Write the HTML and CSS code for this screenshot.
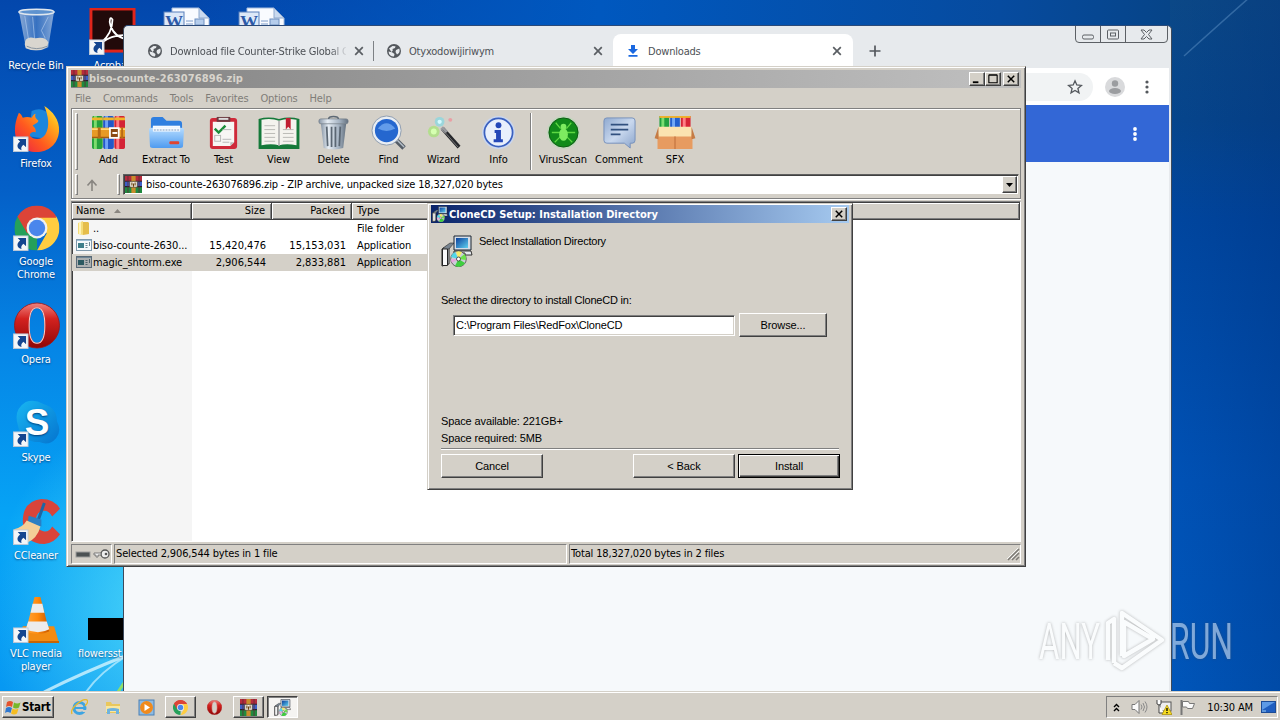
FILE: index.html
```html
<!DOCTYPE html>
<html lang="en">
<head>
    <meta charset="UTF-8">
    <meta name="viewport" content="width=device-width, initial-scale=1.0">
    <title>Desktop</title>
    <link rel="stylesheet" href="styles.css">
</head>
<body>
    <!-- shared icons -->
    <svg class="defs" width="0" height="0">
        <defs>
            <linearGradient id="gGlass" x1="0" x2="1"><stop offset="0" stop-color="#b9cbe3" stop-opacity=".75"/><stop offset=".5" stop-color="#5b8ccc" stop-opacity=".6"/><stop offset="1" stop-color="#b3c9e6" stop-opacity=".75"/></linearGradient>
            <linearGradient id="gOpera" x1="0" y1="0" x2="0" y2="1"><stop offset="0" stop-color="#f0837e"/><stop offset=".35" stop-color="#d3221f"/><stop offset="1" stop-color="#8f0606"/></linearGradient>
            <linearGradient id="gFox" x1="0" y1="1" x2="1" y2="0"><stop offset="0" stop-color="#e8174f"/><stop offset=".4" stop-color="#ff5a1f"/><stop offset=".75" stop-color="#ffb01c"/><stop offset="1" stop-color="#fff04a"/></linearGradient>
            <linearGradient id="gFolder" x1="0" y1="0" x2="0" y2="1"><stop offset="0" stop-color="#b6dcff"/><stop offset="1" stop-color="#4e9bf0"/></linearGradient>
            <linearGradient id="gMetal" x1="0" x2="1"><stop offset="0" stop-color="#8896a6"/><stop offset=".3" stop-color="#e6edf4"/><stop offset=".7" stop-color="#a5b3c2"/><stop offset="1" stop-color="#64717f"/></linearGradient>
            <linearGradient id="gBubble" x1="0" y1="0" x2="1" y2="1"><stop offset="0" stop-color="#8fa9d0"/><stop offset=".5" stop-color="#c9d8ee"/><stop offset="1" stop-color="#8aa4cb"/></linearGradient>
            <linearGradient id="gScreen" x1="0" y1="0" x2="1" y2="1"><stop offset="0" stop-color="#0b3f9c"/><stop offset="1" stop-color="#5fd0f0"/></linearGradient>
            <linearGradient id="gSkype" x1="0" y1="0" x2="1" y2="1"><stop offset="0" stop-color="#18b6f2"/><stop offset="1" stop-color="#0574cf"/></linearGradient>
            <linearGradient id="gCone" x1="0" x2="1"><stop offset="0" stop-color="#ffa53a"/><stop offset=".5" stop-color="#ff8a0d"/><stop offset="1" stop-color="#c95a00"/></linearGradient>
        </defs>

        <symbol id="shortcut" viewBox="0 0 15 15">
            <rect x=".5" y=".5" width="14" height="14" fill="#f4f6f8" stroke="#b9c6d6"/>
            <path d="M4.500 2.500h8v8L10 8C8 9.500 7.500 11 8.200 13.200 3.800 12 2.800 8 6.800 5z" fill="#14458f"/>
        </symbol>

        <symbol id="rar" viewBox="0 0 16 16">
            <rect width="16" height="5" y="0" fill="#b52b3c"/>
            <rect width="16" height="5" y="5" fill="#3d5fc4"/>
            <rect width="16" height="6" y="10" fill="#1f8a3f"/>
            <path d="M0 4.900h16M0 10h16" stroke="#241c30" stroke-width="1"/>
            <rect x="2" width="1.500" height="16" fill="#5d2a35" opacity=".5"/>
            <rect x="12.500" width="1.500" height="16" fill="#5d2a35" opacity=".5"/>
            <rect x="6" width="4" height="16" fill="#c98d2c"/>
            <rect x="4.500" y="5" width="7" height="5.500" fill="#f2efe6" stroke="#55442e" stroke-width=".7"/>
            <path d="M6.500 6v3M8 7v3M9.500 6v3" stroke="#69400f" stroke-width="1"/>
        </symbol>

        <symbol id="books" viewBox="0 0 34 34">
            <rect x="0" y="0" width="11" height="34" rx="2" fill="#24a13d"/><rect x="2" y="0" width="3" height="34" fill="#7ddc6d"/>
            <rect x="11.500" y="0" width="11" height="34" rx="2" fill="#2258c9"/><rect x="13.500" y="0" width="3" height="34" fill="#6fa2f5"/>
            <rect x="23" y="0" width="11" height="34" rx="2" fill="#d42336"/><rect x="25" y="0" width="3" height="34" fill="#ff7c83"/>
            <path d="M0 3h11M11.500 3h11M23 3h11" stroke="#f0b429" stroke-width="3"/>
            <rect x="-1" y="12" width="36" height="11" fill="#e79a25"/>
            <path d="M0 13.500h34" stroke="#ffd675" stroke-width="2"/>
            <path d="M0 22h34" stroke="#a55b10" stroke-width="1.500"/>
            <rect x="6" y="12" width="3" height="11" fill="#b96a14"/><rect x="30" y="12" width="2" height="11" fill="#b96a14"/>
            <rect x="18.500" y="12.500" width="9" height="10" fill="#8b4a14" stroke="#fff" stroke-width="1.800"/>
            <path d="M21 17.500h5" stroke="#fff" stroke-width="2"/>
        </symbol>

        <symbol id="chrome" viewBox="0 0 44 44">
            <path d="M22 22 2.900 11A22 22 0 0 1 41 11z" fill="#dc4437"/>
            <path d="M22 22V44A22 22 0 0 1 2.900 11z" fill="#25a05a"/>
            <path d="M22 0m19 11H22L31.500 27.500 22 44A22 22 0 0 0 41 11z" fill="#ffcd40"/>
            <path d="M22 12h19a22 22 0 0 0-38-1l9.500 16.500z" fill="#dc4437"/>
            <circle cx="22" cy="22" r="10.200" fill="#f1f1f1"/>
            <circle cx="22" cy="22" r="8" fill="#4a86ec"/>
        </symbol>

        <symbol id="opera" viewBox="0 0 44 44">
            <path fill-rule="evenodd" fill="url(#gOpera)" stroke="#a11414" stroke-width=".8" d="M22 .5a21.500 21.500 0 0 1 0 43 21.500 21.500 0 0 1 0-43zM22 5c-5.500 0-7.500 7.500-7.500 17s2 17 7.500 17 7.500-7.500 7.500-17S27.500 5 22 5z"/>
            <path d="M14.500 22c0-9.500 2-17 7.500-17s7.500 7.500 7.500 17-2 17-7.500 17-7.500-7.500-7.500-17z" fill="none" stroke="#f7cdca" stroke-width="1"/>
        </symbol>

        <symbol id="setup" viewBox="0 0 32 32">
            <path d="M1 14l7-4v19l-7 2z" fill="#d6dae0" stroke="#222" stroke-width="1"/>
            <path d="M1.500 14h5v16.500h-5z" fill="#fafafa" stroke="#222" stroke-width="1"/>
            <path d="M2 13l7-5h4l-5 6z" fill="#77838f" stroke="#333" stroke-width=".6"/>
            <path d="M13 1h17v14H13z" fill="#d5dde8" stroke="#1b2430" stroke-width="1"/>
            <path d="M15 3h12v10H15z" fill="url(#gScreen)"/>
            <path d="M13 16h17l1 4h-7v-2H13z" fill="#e6e9ee" stroke="#222" stroke-width=".9"/>
            <circle cx="17.500" cy="24" r="7.800" fill="#c9ced6" stroke="#3b3b3b" stroke-width=".7"/>
            <path d="M17.500 24 10 22a7.800 7.800 0 0 1 4-5z" fill="#52d6e8"/>
            <path d="M17.500 24 15 16.700a7.800 7.800 0 0 1 6 .5z" fill="#f5ec66"/>
            <path d="M17.500 24l6-5a7.800 7.800 0 0 1 1.500 6z" fill="#6de04b"/>
            <path d="M17.500 24 24 28a7.800 7.800 0 0 1-10 3z" fill="#3fcf3f"/>
            <path d="M17.500 24 11 28a7.800 7.800 0 0 1-1-4z" fill="#e7a7dc"/>
            <circle cx="17.500" cy="24" r="2" fill="#fff" stroke="#333" stroke-width=".8"/>
        </symbol>

        <symbol id="globe" viewBox="0 0 14 14">
            <circle cx="7" cy="7" r="7" fill="#54585d"/>
            <path d="M2 4.500 5.500 2l3 .3L8 4 5.500 5l.3 1.400L4.500 8zM1.500 7.500l3.500.8L7.500 10 7 12.500A5.600 5.600 0 0 1 1.500 7.500zM9 6l3.300-1.500A5.500 5.500 0 0 1 12 9l-2 1.500L8.500 8z" fill="#e7eaed"/>
        </symbol>

        <symbol id="cross" viewBox="0 0 10 10">
            <path d="M1.200 1.200l7.600 7.600M8.800 1.200L1.200 8.800" stroke="#5a5e63" stroke-width="1.700"/>
        </symbol>

        <symbol id="worddoc" viewBox="0 0 48 30">
            <path d="M9 1h27l10 10v19H9z" fill="#f9fbff" stroke="#a8bddc"/>
            <path d="M36 1v10h10z" fill="#c9d9ef" stroke="#8fa9cd"/>
            <rect x="1" y="5" width="20" height="20" fill="#dce8f8" stroke="#5a80bb"/>
            <text x="2" y="20" class="word-letter" textLength="18" lengthAdjust="spacingAndGlyphs">W</text>
            <path d="M23 14h7M23 17h7M23 20h19M23 23h19" stroke="#7c9cca"/>
            <rect x="32" y="12" width="9" height="6" fill="#b5cdec" stroke="#6f90c0"/>
        </symbol>

        <symbol id="exe" viewBox="0 0 16 12">
            <rect x=".5" y=".5" width="15" height="11" fill="#f6fafc" stroke="#7f98ab"/>
            <path d="M1 1.500h14" stroke="#9fc0d6"/>
            <rect x="2" y="4" width="6" height="5" fill="#3f7f8b"/>
            <path d="M9.500 4.500h2M9.500 6.500h2M9.500 8.500h2M13.500 3v4" stroke="#6f8a97"/>
        </symbol>
    </svg>

    <div class="desktop">
        <svg class="wallpaper" viewBox="0 0 1280 692">
            <path d="M44 692Q84 672 128 655" stroke="#dff8ff" stroke-width="3" fill="none" opacity=".75"/>
            <path d="M86 692Q100 672 128 655" stroke="#c7f1ff" stroke-width="2" fill="none" opacity=".7"/>
            <path d="M118 692l8-12" stroke="#8ee06a" stroke-width="3"/>
            <path d="M1250-3Q1215 28 1184 56" stroke="#5b8fc4" stroke-width="1.500" fill="none" opacity=".5"/>
        </svg>

        <div class="icons">
            <div class="shortcut-item">
                <svg class="pic" viewBox="0 0 48 48">
                    <path d="M6 3h36l-6 37q-12 7-23 0z" fill="url(#gGlass)"/>
                    <path d="M12 37q0-9 11-6 10-2 13 4l-1 5q-10 6-22 1z" fill="#d9d6cf"/>
                    <path d="M14 39q10 5 21 0" stroke="#89949f" fill="none"/>
                    <path d="M12 8l4 25M20 9l2 22M36 9l-7 14 4 8" stroke="#bcd3f0" stroke-width="1" fill="none" opacity=".6"/>
                    <ellipse cx="24" cy="4" rx="18" ry="2.800" fill="#5f93cf" stroke="#e0e7ee" stroke-width="1.500"/>
                </svg>
                <span>Recycle Bin</span>
            </div>
            <div class="shortcut-item">
                <svg class="pic" viewBox="0 0 48 48">
                    <path d="M19 5q12-5 19 5l-2 24-20-3z" fill="#1c86dc"/>
                    <path d="M32 0c8 5 16 14 15 26-1 13-11 21-23 21C11 47 2 38 2 25 2 19 3 14 6 7c2 1 3 3 4 5 3-1 6-1 9 0 2-3 3-4 4-4-1 3 0 5 3 7-1 3-4 3-6 5 2 2 4 4 3 7-3-1-5 0-6 3 4 5 12 5 16-1 5-8 3-19-1-29z" fill="url(#gFox)"/>
                    <use href="#shortcut" x="0" y="31" width="16" height="16"/>
                </svg>
                <span>Firefox</span>
            </div>
            <div class="shortcut-item">
                <svg class="pic" viewBox="0 0 48 48">
                    <use href="#chrome" x="1.500" y="1.500" width="46" height="46"/>
                    <use href="#shortcut" x="0" y="32" width="16" height="16"/>
                </svg>
                <span>Google<br>Chrome</span>
            </div>
            <div class="shortcut-item">
                <svg class="pic" viewBox="0 0 48 48">
                    <use href="#opera" x="1" y="0" width="47" height="48"/>
                    <use href="#shortcut" x="0" y="32" width="16" height="16"/>
                </svg>
                <span>Opera</span>
            </div>
            <div class="shortcut-item">
                <svg class="pic" viewBox="0 0 48 48">
                    <path d="M13 2q9-3 18 2 14 4 14 18 5 10-1 17-7 8-17 4Q8 43 5 26 0 10 13 2z" fill="url(#gSkype)"/>
                    <text x="12" y="36" class="skype-letter" textLength="25" lengthAdjust="spacingAndGlyphs">S</text>
                    <use href="#shortcut" x="0" y="32" width="16" height="16"/>
                </svg>
                <span>Skype</span>
            </div>
            <div class="shortcut-item">
                <svg class="pic" viewBox="0 0 48 48">
                    <path d="M48 11Q42 1 29 1 10 3 10 24q1 23 22 23 10-1 16-10l-8-8q-3 6-9 5-8-2-8-11 1-10 9-10 5 0 8 6z" fill="#d9443a"/>
                    <path d="M32 5L26 22" stroke="#1f66a3" stroke-width="3"/>
                    <path d="M16 18l13 4v7l-14-4z" fill="#2a7fc4"/>
                    <path d="M14 23l14 6q-3 12-14 17L1 32q9-2 13-9z" fill="#f3cf98"/>
                    <use href="#shortcut" x="0" y="32" width="16" height="16"/>
                </svg>
                <span>CCleaner</span>
            </div>
            <div class="shortcut-item">
                <svg class="pic" viewBox="0 0 48 48">
                    <path d="M10 31h32l5 17H5z" fill="#f28b12"/>
                    <path d="M5 46h42v2H5z" fill="#c56505"/>
                    <path d="M22 1h6l9 35q-11 6-24 0z" fill="url(#gCone)"/>
                    <path d="M20 8h10l2 9H18zM15.500 26h19l2.500 8q-11 6-24 0z" fill="#ececec"/>
                    <use href="#shortcut" x="0" y="32" width="16" height="16"/>
                </svg>
                <span>VLC media<br>player</span>
            </div>
        </div>

        <div class="icons second">
            <div class="shortcut-item">
                <svg class="pic" viewBox="0 0 48 48">
                    <rect x="2" y="1" width="44" height="43" fill="#220a0a" stroke="#e0251b" stroke-width="3"/>
                    <path d="M12 36c7-6 12-15 12-24-2-4-4 0-2 6 3 9 9 13 18 14 4 0 4-3-1-4-10-1-19 2-27 8z" fill="none" stroke="#fff" stroke-width="1.800"/>
                    <use href="#shortcut" x="0" y="32" width="16" height="16"/>
                </svg>
                <span>Acrobat</span>
            </div>
            <div class="shortcut-item last">
                <div class="black-thumb"></div>
                <span>flowersst</span>
            </div>
        </div>
        <div class="docs">
            <svg width="48" height="30"><use href="#worddoc"/></svg>
            <svg width="48" height="30"><use href="#worddoc"/></svg>
        </div>

        <div class="browser">
            <div class="tabs">
                <div class="tab first">
                    <svg width="14" height="14"><use href="#globe"/></svg>
                    <span class="tab-title fade">Download file Counter-Strike Global C</span>
                    <svg width="10" height="10"><use href="#cross"/></svg>
                </div>
                <div class="tab middle">
                    <svg width="14" height="14"><use href="#globe"/></svg>
                    <span class="tab-title">Otyxodowijiriwym</span>
                    <svg width="10" height="10"><use href="#cross"/></svg>
                </div>
                <div class="tab active">
                    <svg width="14" height="14" viewBox="0 0 14 14"><path d="M5 1h4v4h3L7 10 2 5h3zM2.500 11h9v1.800h-9z" fill="#1a68e0"/></svg>
                    <span class="tab-title">Downloads</span>
                    <svg width="10" height="10"><use href="#cross"/></svg>
                </div>
                <svg class="plus" width="12" height="12" viewBox="0 0 12 12"><path d="M6 .5v11M.5 6h11" stroke="#54585d" stroke-width="1.700"/></svg>
                <div class="glass-buttons">
                    <svg width="93" height="17" viewBox="0 0 93 17">
                        <g fill="none" stroke="#5c6065">
                            <path d="M.5 0v13q0 3.500 3.500 3.500h85q3.500 0 3.500-3.500V0M25.500 0v16M50.500 0v16"/>
                            <rect x="7.500" y="9" width="11" height="4" rx="1.500"/>
                            <rect x="32.500" y="4" width="11" height="9" rx="1"/>
                            <rect x="35.500" y="7" width="5" height="3"/>
                            <path d="M66 4h3l2.500 2.500L74 4h3l-3.500 4.500L77 13h-3l-2.500-2.500L69 13h-3l3.500-4.500z"/>
                        </g>
                    </svg>
                </div>
            </div>
            <div class="omnibar">
                <div class="omnibox">
                    <svg width="16" height="16" viewBox="0 0 16 16"><path d="M8 1.800l1.800 4.200 4.600.4-3.500 3 1.100 4.500-4-2.400-4 2.400 1.100-4.500-3.500-3 4.600-.4z" fill="none" stroke="#54585d" stroke-width="1.300"/></svg>
                </div>
                <svg class="avatar" width="20" height="20" viewBox="0 0 20 20"><circle cx="10" cy="10" r="10" fill="#d9dadc"/><circle cx="10" cy="6.500" r="3.200" fill="#9b9da0"/><ellipse cx="10" cy="14" rx="6" ry="3" fill="#9b9da0"/></svg>
                <svg class="dots" width="4" height="14" viewBox="0 0 4 14"><g fill="#54585d"><circle cx="2" cy="2" r="1.600"/><circle cx="2" cy="7" r="1.600"/><circle cx="2" cy="12" r="1.600"/></g></svg>
            </div>
            <div class="page-head">
                <svg width="4" height="14" viewBox="0 0 4 14"><g fill="#fff"><circle cx="2" cy="2" r="1.900"/><circle cx="2" cy="7" r="1.900"/><circle cx="2" cy="12" r="1.900"/></g></svg>
            </div>
        </div>

        <div class="winrar">
            <div class="titlebar">
                <svg width="17" height="17"><use href="#rar"/></svg>
                <span class="title">biso-counte-263076896.zip</span>
                <div class="sys"><svg viewBox="0 0 15 13"><path d="M3 10h6" stroke="#000" stroke-width="2"/></svg></div>
                <div class="sys"><svg viewBox="0 0 15 13"><path d="M3 2.500h9v8H3zM3 2h9" fill="none" stroke="#000" stroke-width="1.200"/></svg></div>
                <div class="sys close"><svg viewBox="0 0 15 13"><path d="M4 3l7 7M11 3l-7 7" stroke="#000" stroke-width="1.600"/></svg></div>
            </div>
            <div class="menubar">
                <span>File</span><span>Commands</span><span>Tools</span><span>Favorites</span><span>Options</span><span>Help</span>
            </div>
            <div class="bars">
                <div class="toolbar">
                    <div class="grip"></div>
                    <div class="tool"><svg viewBox="0 0 36 36"><use href="#books" x="1" y="1" width="34" height="34"/></svg>Add</div>
                    <div class="tool wide"><svg viewBox="0 0 36 36"><path d="M2 5q0-3 3-3h9l4 4h13q3 0 3 3v18H2z" fill="#2f7fe0"/><path d="M4 11h28v6H4z" fill="#f6faff"/><path d="M0 15q0-2 3-2h30q3 0 3 2l-1 17q0 2-3 2H4q-3 0-3-2z" fill="url(#gFolder)"/><path d="M4 13h28v4H4z" fill="#f6faff"/><path d="M5 15.500h26" stroke="#b9cbe0" stroke-width="2" stroke-dasharray="2 1"/><rect x="21" y="27" width="10" height="3" rx="1" fill="#e04430"/></svg>Extract To</div>
                    <div class="tool"><svg viewBox="0 0 36 36"><rect x="4" y="3" width="28" height="32" rx="3" fill="#cf2a3a"/><path d="M7 7h22v21l-4 4H7z" fill="#f7f6f4"/><path d="M29 28l-4 4v-4z" fill="#bbb"/><path d="M11 2h14v5H11z" fill="#6b3a40"/><path d="M13 4h10" stroke="#ddd" stroke-width="2"/><path d="M9 14l4 4 7-7" stroke="#1c8c3a" stroke-width="2.500" fill="none"/><path d="M17 15h9M17 25h9M17 28h7" stroke="#b8b8b8"/><rect x="9" y="21" width="6" height="6" fill="none" stroke="#b8b8b8"/></svg>Test</div>
                    <div class="tool"><svg class="big" viewBox="0 0 42 36"><path d="M0 4q10-3 21 0 11-3 21 0v31H0z" fill="#15793a"/><path d="M3 5q10-2 18 1v25q-8-2-18 0zM39 5q-10-2-18 1v25q8-2 18 0z" fill="#f4f3ee"/><path d="M21 6v26" stroke="#a9a9a9" stroke-width="1.500"/><path d="M6 11h11M6 15h11M6 19h11M6 23h11M6 27h11M25 15h11M25 19h11M25 23h11M25 27h11" stroke="#b9b9b5"/><path d="M28 3h5v12l-2.500-3-2.500 3z" fill="#c01f32"/></svg>View</div>
                    <div class="tool"><svg viewBox="0 0 36 36"><path d="M5 9h26l-3 25q-10 3-20 0z" fill="url(#gMetal)"/><path d="M11 12l1 20M16 12v21M20 12v21M25 12l-1 20" stroke="#5b6773" stroke-width="1.800"/><rect x="3" y="4" width="30" height="5" rx="2" fill="url(#gMetal)" stroke="#6a7683" stroke-width=".7"/><path d="M13 4q0-2.500 5-2.500T23 4" fill="none" stroke="#5d6975" stroke-width="1.500"/></svg>Delete</div>
                    <div class="tool"><svg viewBox="0 0 36 36"><path d="M25 25l9 9" stroke="#555d66" stroke-width="5"/><path d="M25 24l9 9" stroke="#b7c1cb" stroke-width="1.500"/><circle cx="16" cy="16" r="15" fill="#e9eef4" stroke="#8d9cae"/><circle cx="16" cy="16" r="12" fill="#2567cf"/><path d="M7 14q9-11 18 0-9 5-18 0z" fill="#7db4f5" opacity=".7"/></svg>Find</div>
                    <div class="tool"><svg viewBox="0 0 36 36"><path d="M17 14l17 19" stroke="#26272b" stroke-width="4"/><path d="M16 13l5 5" stroke="#9a9ba0" stroke-width="4"/><path d="M17 15l16 18" stroke="#777" stroke-width="1"/><circle cx="8" cy="17" r="6" fill="#98ea5c" opacity=".55"/><circle cx="8" cy="17" r="3" fill="#d6ffb2"/><circle cx="14" cy="7" r="5" fill="#75dbe8" opacity=".6"/><circle cx="14" cy="7" r="2.200" fill="#d4faff"/><circle cx="25" cy="5" r="2" fill="#f28a95" opacity=".7"/></svg>Wizard</div>
                    <div class="tool"><svg viewBox="0 0 36 36"><circle cx="18" cy="18" r="17" fill="#c9d6ef"/><circle cx="18" cy="18" r="14.500" fill="#e8effc" stroke="#3a60bf" stroke-width="1.800"/><circle cx="18" cy="10.500" r="3" fill="#2447b8"/><path d="M14 15.500h6.500V25h2v3H13v-3h2.500v-6.500H14z" fill="#2447b8"/></svg>Info</div>
                    <div class="split"></div>
                    <div class="tool"><svg viewBox="0 0 36 36"><circle cx="18" cy="18" r="17" fill="#c3d6be"/><circle cx="18" cy="18" r="15" fill="#118a1a" stroke="#0b5c12"/><g stroke="#5ed842" stroke-width="1.300" fill="none"><path d="M15 14l-5-6M21 14l5-6M15 18H6M21 18h9M15 22l-6 6M21 22l6 6"/></g><ellipse cx="18" cy="20" rx="4.500" ry="6.500" fill="#7dec60"/><circle cx="18" cy="12" r="3" fill="#7dec60"/></svg>VirusScan</div>
                    <div class="tool"><svg viewBox="0 0 36 36"><path d="M5 3h26q3 0 3 3v20q0 3-3 3h-2v5l-6-5H5q-3 0-3-3V6q0-3 3-3z" fill="url(#gBubble)" stroke="#7791bb"/><path d="M9 10h18M9 15h18M9 20h10" stroke="#31507f" stroke-width="1.800"/></svg>Comment</div>
                    <div class="tool"><svg class="big" viewBox="0 0 42 36"><path d="M5 1h10v14H5z" fill="#22a040"/><path d="M7 1h3v14H7z" fill="#7bdd72"/><path d="M16 1h10v14H16z" fill="#2360ce"/><path d="M18 1h3v14h-3z" fill="#73a9f6"/><path d="M27 1h10v14H27z" fill="#d62536"/><path d="M29 1h3v14h-3z" fill="#ff7f86"/><path d="M5 2h32" stroke="#efb12c" stroke-width="2"/><path d="M3 20h36v15H3z" fill="#e79b60"/><path d="M4 12h34v10H4z" fill="#fbe3b0"/><path d="M4 12L0 24l4 1zM38 12l4 12-4 1z" fill="#c57b45"/><path d="M21 22v13" stroke="#bb6c38"/></svg>SFX</div>
                </div>
                <div class="address-row">
                    <div class="grip"></div>
                    <svg class="up" width="12" height="12" viewBox="0 0 12 12"><path d="M6 12V2M1.500 6.500L6 1.500l4.500 5" fill="none" stroke="#888580" stroke-width="1.600"/></svg>
                    <div class="grip second-grip"></div>
                    <div class="address">
                        <svg width="17" height="17"><use href="#rar"/></svg>
                        <span>biso-counte-263076896.zip - ZIP archive, unpacked size 18,327,020 bytes</span>
                        <div class="drop"><svg width="7" height="4" viewBox="0 0 7 4"><path d="M0 0h7L3.500 4z"/></svg></div>
                    </div>
                </div>
            </div>
            <div class="list">
                <div class="row head">
                    <div class="name">Name <svg width="7" height="4" viewBox="0 0 7 4"><path d="M0 4h7L3.500 0z" fill="#8a8680"/></svg></div>
                    <div class="size">Size</div>
                    <div class="packed">Packed</div>
                    <div class="type">Type</div>
                </div>
                <div class="row">
                    <div class="name"><svg width="16" height="16" viewBox="0 0 16 16"><path d="M2 3l5-2v14l-5-1z" fill="#f5dc79"/><path d="M7 2h5l1 1v11l-6 1z" fill="#e5bd4b"/><path d="M4 2v12" stroke="#fff3b5" stroke-width="2"/></svg>..</div>
                    <div class="size"></div>
                    <div class="packed"></div>
                    <div class="type">File folder</div>
                </div>
                <div class="row">
                    <div class="name"><svg width="16" height="12"><use href="#exe"/></svg>biso-counte-2630...</div>
                    <div class="size">15,420,476</div>
                    <div class="packed">15,153,031</div>
                    <div class="type">Application</div>
                </div>
                <div class="row selected">
                    <div class="name"><svg class="dim" width="16" height="12"><use href="#exe"/></svg>magic_shtorm.exe</div>
                    <div class="size">2,906,544</div>
                    <div class="packed">2,833,881</div>
                    <div class="type">Application</div>
                </div>
            </div>
            <div class="status">
                <div class="cell small">
                    <svg width="36" height="12" viewBox="0 0 36 12"><rect x="1" y="4" width="14" height="5" fill="#4b5153" stroke="#9b9c9b"/><circle cx="30" cy="6" r="4" fill="#eee" stroke="#555" stroke-width="1.300"/><circle cx="31" cy="6" r="1.300" fill="#555"/><path d="M26 5h-7v2h2v2h2V7h3z" fill="#eee" stroke="#666" stroke-width=".8"/></svg>
                </div>
                <div class="cell left">Selected 2,906,544 bytes in 1 file</div>
                <div class="cell right">Total 18,327,020 bytes in 2 files
                    <svg width="14" height="14" viewBox="0 0 14 14"><path d="M2 13L13 2M6 13l7-7M10 13l3-3" stroke="#7d7a75" stroke-width="1.500"/><path d="M1 12L12 1M5 12l8-8" stroke="#fff" stroke-width=".8"/></svg>
                </div>
            </div>
        </div>

        <div class="dialog">
            <div class="titlebar">
                <svg width="16" height="16"><use href="#setup"/></svg>
                <span class="title">CloneCD Setup: Installation Directory</span>
                <div class="sys close"><svg viewBox="0 0 15 13"><path d="M4 3l7 7M11 3l-7 7" stroke="#000" stroke-width="1.600"/></svg></div>
            </div>
            <div class="dialog-head">
                <svg width="32" height="32"><use href="#setup"/></svg>
                <span>Select Installation Directory</span>
            </div>
            <label class="prompt" for="dir">Select the directory to install CloneCD in:</label>
            <div class="path-row">
                <input id="dir" type="text" value="C:\Program Files\RedFox\CloneCD">
                <button class="browse">Browse...</button>
            </div>
            <div class="space">
                <div class="avail">Space available: 221GB+</div>
                <div class="need">Space required: 5MB</div>
            </div>
            <div class="actions">
                <button>Cancel</button>
                <button class="back">&lt; Back</button>
                <button class="default">Install</button>
            </div>
        </div>

        <svg class="watermark" width="200" height="70" viewBox="0 0 200 70">
            <g class="mark-text">
                <text x="3" y="53" textLength="61" lengthAdjust="spacingAndGlyphs">ANY</text>
                <text x="134" y="53" textLength="63" lengthAdjust="spacingAndGlyphs">RUN</text>
            </g>
            <g class="mark-logo" fill="none" stroke="#fff" stroke-width="4.500" stroke-linejoin="round">
                <path d="M72 54V17l6-4v44"/>
                <path d="M86 50V7l40 27-40 28-8-5M88 50l29-17-29-17z"/>
            </g>
        </svg>
    </div>

    <div class="taskbar">
        <button class="start">
            <svg width="16" height="15" viewBox="0 0 16 15"><path d="M2 2q3-2 6 0L7 7Q4 5 1 7z" fill="#e5532d"/><path d="M9 2.500q3 2 6.500 0L14 7.500q-3 2-6 0z" fill="#77b82a"/><path d="M1 8q3-2 6 0l-1.500 5q-3-2-5.500 0z" fill="#2f78d0"/><path d="M7.500 8.500q3 2 6 0l-1.500 5q-3 2-6 0z" fill="#f6bd22"/></svg>
            Start
        </button>
        <div class="task flat ie"><svg width="17" height="17" viewBox="0 0 17 17"><circle cx="8.500" cy="9" r="5.500" fill="none" stroke="#3da4e2" stroke-width="3"/><path d="M4 9h10" stroke="#3da4e2" stroke-width="2"/><path d="M10 11h6v2h-4z" fill="#d4d0c8"/><path d="M1 15Q-1 11 6 5t10-4q2 2-2 6" fill="none" stroke="#e8b92c" stroke-width="1.300"/></svg></div>
        <div class="task flat explorer"><svg width="16" height="15" viewBox="0 0 16 15"><path d="M1 2h5l1 2h8v9H1z" fill="#e9c75c"/><path d="M1 6h14v6H1z" fill="#f9e79f"/><path d="M2 14V9q6-2 12 0v5h-3v-3H5v3z" fill="#6fb3de"/></svg></div>
        <div class="task flat media"><svg width="17" height="17" viewBox="0 0 17 17"><rect x="1" y="1" width="15" height="15" fill="#8dbbe3" stroke="#4b80b5"/><circle cx="8.500" cy="8.500" r="6.500" fill="#f08a1c"/><path d="M6.500 5l5.500 3.500-5.500 3.500z" fill="#fff"/></svg></div>
        <div class="task raised"><svg width="15" height="15"><use href="#chrome"/></svg></div>
        <div class="task flat op"><svg width="15" height="15"><use href="#opera"/></svg></div>
        <div class="task raised"><svg width="17" height="17"><use href="#rar"/></svg></div>
        <div class="task pressed"><svg width="17" height="17"><use href="#setup"/></svg></div>
        <div class="tray">
            <svg width="7" height="9" viewBox="0 0 7 9"><path d="M1 4l2.500-2.500L6 4M1 8l2.500-2.500L6 8" fill="none" stroke="#000" stroke-width="1.400"/></svg>
            <svg class="vol" width="17" height="14" viewBox="0 0 17 14"><path d="M1 4.500h3l4-4v13l-4-4H1z" fill="#fafafa" stroke="#777"/><path d="M10 4.500q2 2.500 0 5M12 3q3 4 0 8M14 1.500q4 5.500 0 11" fill="none" stroke="#8a8a8a"/></svg>
            <svg class="net" width="16" height="16" viewBox="0 0 16 16"><rect x="4" y="3" width="11" height="9" fill="#eee" stroke="#555"/><path d="M1 1v4q2 2 4 0V1M3 6v8h5" fill="#fff" stroke="#444"/><path d="M11 6l5 9.500H6z" fill="#f7dc22" stroke="#a68a00" stroke-width=".7"/><path d="M11 9v3M11 13v1.300" stroke="#000" stroke-width="1.300"/></svg>
            <svg class="flag" width="16" height="15" viewBox="0 0 16 15"><path d="M1.500 0v15" stroke="#777" stroke-width="2"/><path d="M2.500 1.500h6l1 2h5l-2 5h-5l-1-1.500h-4z" fill="#fafafa" stroke="#777"/></svg>
            <span class="clock">10:30 AM</span>
            <svg width="15" height="12" viewBox="0 0 15 12"><rect x=".5" y=".5" width="14" height="11" fill="#1f5ec0" stroke="#1c4c97"/><path d="M1 1h13L1 9z" fill="#5d9ae6"/><path d="M1 10h4" stroke="#9fd0f8"/></svg>
        </div>
    </div>
</body>
</html>
```
FILE: styles.css
```css
* {
    box-sizing: border-box;
}

body {
    margin: 0;
    width: 1280px;
    height: 720px;
    overflow: hidden;
    font-family: "DejaVu Sans Condensed", "DejaVu Sans", sans-serif;
    font-stretch: condensed;
    font-size: 11px;
    letter-spacing: -0.15px;
    color: #000;
}

svg {
    flex: none;
    display: block;
}

.defs {
    position: absolute;
}

.desktop {
    position: relative;
    height: 692px;
    overflow: hidden;
    background:
        radial-gradient(ellipse 170px 200px at 160px 610px, rgba(90, 225, 250, 0.8), transparent),
        linear-gradient(90deg, transparent 1170px, rgba(0, 50, 120, 0.35) 1280px),
        linear-gradient(90deg, transparent 0, transparent 200px, #0058bf 600px, #064b9f 1000px, #064488 1170px, #0052b4 1171px),
        linear-gradient(#0347ac 0, #0460c8 190px, #0586e6 350px, #06a4f6 520px, #0798f2 692px);
}

.desktop::before {
    content: "";
    position: absolute;
    right: 0;
    top: 0;
    width: 110px;
    height: 692px;
    background: linear-gradient(90deg, transparent, rgba(0, 40, 110, 0.25)), linear-gradient(#0b4887 0, #06458c 120px, #00469f 220px, #0052b6 480px, #0056ba 692px);
}

.wallpaper {
    position: absolute;
    left: 0;
    top: 0;
    width: 1280px;
    height: 692px;
}

/* desktop icons */
.icons {
    position: absolute;
    left: 0;
    top: 8px;
    width: 72px;
}

.shortcut-item {
    height: 98px;
    display: flex;
    flex-direction: column;
    align-items: center;
    color: #fff;
    line-height: 13px;
    text-align: center;
    text-shadow: 0 1px 2px rgba(0, 30, 80, 0.7);
}

.pic {
    width: 47px;
    height: 47px;
    margin-bottom: 4px;
}

.icons.second {
    left: 76px;
    display: flex;
    flex-direction: column;
    justify-content: space-between;
    height: 680px;
}

.black-thumb {
    width: 48px;
    height: 22px;
    background: #000;
    margin: 6px 0 7px 12px;
}

.shortcut-item.last {
    align-items: flex-start;
    height: 76px;
}

.last span {
    padding-left: 2px;
}

.docs {
    position: absolute;
    left: 163px;
    top: 7px;
    display: flex;
    gap: 27px;
}

.word-letter {
    font: bold 17px "Liberation Serif", serif;
    fill: #2c5aa8;
}

.skype-letter {
    font: bold 38px "Liberation Sans", sans-serif;
    fill: #fff;
}

/* browser window */
.browser {
    position: absolute;
    left: 123px;
    top: 25px;
    width: 1049px;
    height: 680px;
    border: 1px solid #3c4a5c;
    border-top-color: #2b4a78;
    border-radius: 5px 5px 0 0;
    padding-right: 2px;
    background: #e7eaed;
    display: flex;
    flex-direction: column;
}

.tabs {
    height: 42px;
    padding: 8px 0 0 10px;
    display: flex;
    position: relative;
    color: #4d5156;
    letter-spacing: -0.2px;
}

.tab {
    width: 240px;
    display: flex;
    align-items: center;
    padding: 0 9px 0 14px;
    gap: 8px;
}

.tab.middle {
    width: 239px;
    padding: 0 10px 0 13px;
}

.tab.active {
    background: #fff;
    border-radius: 8px 8px 0 0;
    padding: 0 11px 0 13px;
}

.tab-title {
    flex: 1;
    min-width: 0;
    white-space: nowrap;
}

.tab-title.fade {
    -webkit-mask-image: linear-gradient(90deg, #000 160px, transparent 178px);
    mask-image: linear-gradient(90deg, #000 160px, transparent 178px);
}

.tab.first {
    border-right: 1px solid #7d8185;
    height: 20px;
    margin-top: 7px;
}

.plus {
    margin: 11px 0 0 16px;
}

.glass-buttons {
    position: absolute;
    right: 1px;
    top: 0;
}

.omnibar {
    height: 37px;
    background: #fff;
    display: flex;
    align-items: center;
    justify-content: flex-end;
    padding-right: 20px;
}

.omnibox {
    width: 800px;
    height: 28px;
    border-radius: 14px;
    background: #f1f3f4;
    display: flex;
    align-items: center;
    justify-content: flex-end;
    padding-right: 10px;
}

.avatar {
    margin: 0 20px 0 12px;
}

.page-head {
    height: 57px;
    background: #3367d6;
    display: flex;
    align-items: center;
    justify-content: flex-end;
    padding-right: 32px;
}

.browser::after {
    content: "";
    flex: 1;
    background: #f6f9fb;
}

/* classic windows */
.winrar,
.dialog {
    position: absolute;
    background: #d4d0c8;
    border: 1px solid;
    border-color: #d4d0c8 #404040 #404040 #d4d0c8;
    box-shadow: inset 1px 1px #fff, inset -1px -1px #808080;
}

.winrar {
    left: 66px;
    top: 66px;
    width: 960px;
    height: 501px;
    padding: 3px 4px 2px 4px;
    display: flex;
    flex-direction: column;
}

.titlebar {
    height: 18px;
    display: flex;
    align-items: center;
    padding-right: 2px;
    background: linear-gradient(90deg, #828282, #c0c0c0);
    color: #d8d4cc;
    font-weight: bold;
    letter-spacing: 0.1px;
}

.title {
    flex: 1;
    padding-left: 1px;
}

.sys {
    width: 16px;
    height: 14px;
    background: #d4d0c8;
    border: 1px solid;
    border-color: #fff #404040 #404040 #fff;
    box-shadow: inset -1px -1px #808080;
}

.sys svg {
    width: 14px;
    height: 12px;
}

.sys.close {
    margin-left: 2px;
}

.menubar {
    height: 20px;
    display: flex;
    align-items: center;
    gap: 12px;
    padding: 1px 0 0 4px;
    color: #807d78;
}

.bars {
    height: 91px;
    border: 1px solid #808080;
    box-shadow: inset 1px 1px #fff, 0 1px #fff;
    display: flex;
    flex-direction: column;
}

.toolbar {
    display: flex;
    height: 64px;
    padding: 4px 0 3px 3px;
}

.grip {
    width: 3px;
    border: 1px solid;
    border-color: #fff #808080 #808080 #fff;
    margin-right: 3px;
}

.tool {
    width: 55px;
    display: flex;
    flex-direction: column;
    align-items: center;
    line-height: 13px;
    padding-top: 2px;
    letter-spacing: -0.1px;
}

.tool.wide {
    width: 60px;
}

.tool svg {
    width: 35px;
    height: 35px;
    margin-bottom: 3px;
}

.tool svg.big {
    width: 42px;
}

.split {
    width: 2px;
    margin: 0 3px 0 4px;
    border-left: 1px solid #808080;
    border-right: 1px solid #fff;
}

.split ~ .tool {
    width: 56px;
}

.address-row {
    display: flex;
    height: 24px;
    padding-left: 3px;
    align-items: center;
}

.address-row .grip {
    height: 21px;
}

.up {
    margin-left: 5px;
}

.address-row .second-grip {
    margin-left: 19px;
    margin-right: 3px;
}

.address {
    flex: 1;
    height: 21px;
    margin-right: 1px;
    padding: 0 1px;
    display: flex;
    align-items: center;
    background: #fff;
    border: 1px solid;
    border-color: #606060 #d4d0c8 #d4d0c8 #606060;
    box-shadow: inset 1px 1px #404040;
}

.address span {
    flex: 1;
    padding-left: 4px;
}

.drop {
    width: 15px;
    height: 17px;
    display: flex;
    align-items: center;
    justify-content: center;
    background: #d4d0c8;
    border: 1px solid;
    border-color: #fff #404040 #404040 #fff;
    box-shadow: inset -1px -1px #808080;
}

.list {
    margin-top: 2px;
    height: 342px;
    border: 1px solid;
    border-color: #808080 #fff #fff #808080;
    box-shadow: inset 1px 1px #404040;
    padding: 1px 0 0 0;
    background: linear-gradient(90deg, #f5f5f5 120px, #fff 120px);
}

.row {
    height: 17px;
    width: 430px;
    display: flex;
    align-items: center;
    letter-spacing: -0.1px;
}

.row.head {
    width: auto;
}

.row > div {
    height: 100%;
    line-height: 17px;
    white-space: nowrap;
}

.row .name {
    width: 120px;
    padding-left: 4px;
    display: flex;
    align-items: center;
    gap: 1px;
}

.row .size,
.row .packed {
    width: 80px;
    padding-right: 6px;
    text-align: right;
    letter-spacing: 0;
}

.row .type {
    flex: 1;
    padding-left: 5px;
}

.row.head > div {
    line-height: 16px;
    background: #d4d0c8;
    border-right: 1px solid #404040;
    border-bottom: 1px solid #404040;
    box-shadow: inset 1px 1px #fff, inset -1px -1px #808080;
}

.row.head .name {
    gap: 9px;
}

.row.selected {
    background: #d4d0c8;
}

.dim {
    filter: brightness(0.7);
}

.status {
    margin-top: 2px;
    height: 20px;
    display: flex;
    gap: 2px;
    line-height: 18px;
}

.cell {
    border: 1px solid;
    border-color: #808080 #fff #fff #808080;
    padding-left: 1px;
}

.cell.small {
    width: 41px;
    padding: 3px 0 0 3px;
}

.cell.left {
    width: 453px;
}

.cell.right {
    flex: 1;
    display: flex;
    justify-content: space-between;
    align-items: center;
}

/* setup dialog */
.dialog {
    left: 427px;
    top: 203px;
    width: 426px;
    height: 287px;
    padding: 1px 3px;
    font-family: "Liberation Sans", sans-serif;
    letter-spacing: -0.22px;
}

.dialog .titlebar {
    background: linear-gradient(90deg, #0a246a, #a6caf0);
    color: #fff;
    font-family: "DejaVu Sans Condensed", "DejaVu Sans", sans-serif;
    letter-spacing: 0;
    padding-left: 1px;
}

.dialog-head {
    display: flex;
    gap: 6px;
    padding: 12px 0 0 10px;
    height: 70px;
}

.prompt {
    display: block;
    padding-left: 10px;
    line-height: 14px;
}

.path-row {
    display: flex;
    align-items: center;
    gap: 4px;
    padding: 6px 0 0 22px;
}

.path-row input {
    width: 282px;
    height: 21px;
    font: 11px "Liberation Sans", sans-serif;
    letter-spacing: -0.18px;
    padding: 0 2px;
    background: #fff;
    border: 1px solid;
    border-color: #808080 #fff #fff #808080;
    box-shadow: inset 1px 1px #404040, inset -1px -1px #d4d0c8;
}

button {
    font: 11px "Liberation Sans", sans-serif;
    letter-spacing: -0.1px;
    width: 102px;
    height: 24px;
    padding: 0 0 1px;
    color: #000;
    background: #d4d0c8;
    border: 1px solid;
    border-color: #fff #404040 #404040 #fff;
    box-shadow: inset -1px -1px #808080;
}

button.browse {
    width: 88px;
}

.space {
    margin: 76px 10px 0;
    padding-bottom: 1px;
    line-height: 17px;
    letter-spacing: -0.12px;
    border-bottom: 1px solid #808080;
    box-shadow: 0 1px #fff;
}

.actions {
    display: flex;
    padding: 5px 9px 0 10px;
}

.actions .back {
    margin-left: auto;
    margin-right: 3px;
}

button.default {
    border-color: #000;
    box-shadow: inset 1px 1px #fff, inset -1px -1px #404040, inset -2px -2px #808080;
}

/* watermark */
.watermark {
    position: absolute;
    left: 1036px;
    top: 606px;
    filter: drop-shadow(0 0 1.5px rgba(70, 70, 70, 0.75));
    opacity: 0.5;
}

.mark-text {
    font: 400 50px Roboto, sans-serif;
    letter-spacing: 0;
    fill: #fff;
}

/* taskbar */
.taskbar {
    height: 28px;
    display: flex;
    align-items: center;
    background: #d4d0c8;
    border-top: 1px solid #fff;
    box-shadow: 0 -1px #d4d0c8;
    position: relative;
    padding: 1px 2px 0;
}

.start {
    width: 52px;
    height: 22px;
    padding: 0 0 0 2px;
    display: flex;
    align-items: center;
    gap: 1px;
    font: bold 11.5px "DejaVu Sans Condensed", "DejaVu Sans", sans-serif;
    letter-spacing: -0.2px;
}

.task {
    width: 31px;
    height: 22px;
    display: flex;
    align-items: center;
    justify-content: center;
}

.ie {
    margin-left: 10px;
}

.explorer {
    margin-left: 2px;
}

.media {
    margin-left: 3px;
    margin-right: 3px;
}

.raised {
    border: 1px solid;
    border-color: #fff #404040 #404040 #fff;
    box-shadow: inset -1px -1px #808080;
}

.op {
    width: 37px;
}

.pressed {
    margin-left: 3px;
    background: #f5f4f2;
    border: 1px solid;
    border-color: #404040 #fff #fff #404040;
    box-shadow: inset 1px 1px #808080;
}

.tray {
    margin-left: auto;
    width: 172px;
    height: 22px;
    border: 1px solid;
    border-color: #808080 #fff #fff #808080;
    display: flex;
    align-items: center;
    padding: 0 1px 0 6px;
}

.vol {
    margin-left: 11px;
}

.net {
    margin-left: 8px;
}

.flag {
    margin-left: 8px;
}

.clock {
    flex: 1;
    text-align: right;
    padding-right: 8px;
    white-space: nowrap;
}
```
